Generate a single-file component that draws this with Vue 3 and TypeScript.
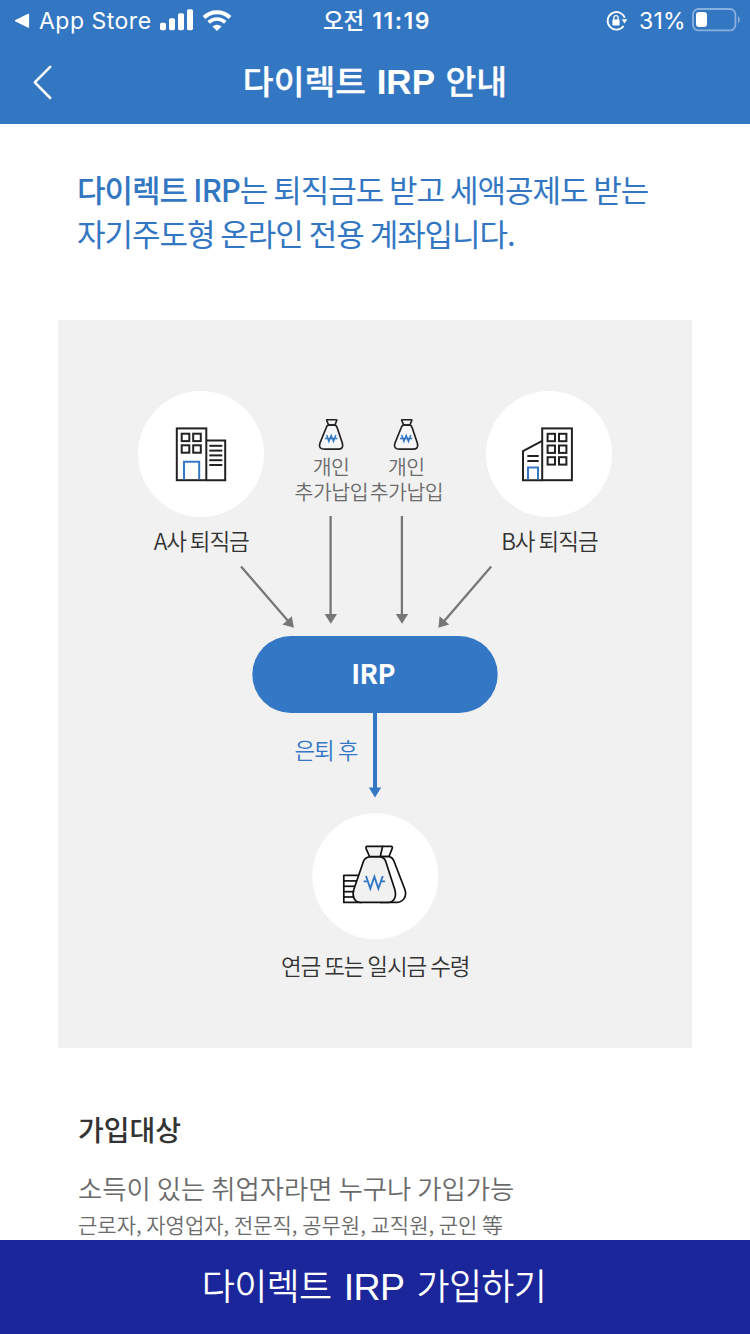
<script setup lang="ts">
interface Point {
  x: number
  y: number
}

const signalBars: { x: number; h: number }[] = [
  { x: 0, h: 7.5 },
  { x: 9, h: 12 },
  { x: 18, h: 17 },
  { x: 27, h: 21 },
]

const windowsA: Point[] = [
  { x: 181.7, y: 433.7 },
  { x: 193.2, y: 433.7 },
  { x: 181.7, y: 445.3 },
  { x: 193.2, y: 445.3 },
]
const slatsA: number[] = [445.8, 450.6, 455.4, 460.2, 465]

const windowsB: Point[] = [433.8, 445.5, 457.2].flatMap((y) => [
  { x: 547.6, y },
  { x: 559, y },
])

const coinLines: number[] = [880.9, 886.3, 891.7, 897]
const deposits: number[] = [0, 75]
</script>

<template>
  <div class="screen">
    <header class="top">
      <div class="status">
        <div class="status-left">
          <svg class="return" width="16" height="16" viewBox="0 0 16 16">
            <path d="M1 8.7 L14.6 2 V15.4 Z" fill="#fff" stroke="#fff" stroke-width="1" stroke-linejoin="round" />
          </svg>
          <span class="carrier">App Store</span>
          <svg class="signal" width="33" height="22" viewBox="0 0 33 22">
            <rect v-for="b in signalBars" :key="b.x" :x="b.x" :y="21.2 - b.h" width="6" :height="b.h" rx="1.6" fill="#fff" />
          </svg>
          <svg class="wifi" width="30" height="23" viewBox="0 0 30 23">
            <path d="M2 8.5 A18.6 18.6 0 0 1 28 8.5" fill="none" stroke="#fff" stroke-width="4" />
            <path d="M6.7 13.4 A11.9 11.9 0 0 1 23.3 13.4" fill="none" stroke="#fff" stroke-width="3.6" />
            <path d="M10.5 17.5 A6.6 6.6 0 0 1 19.5 17.5 L15 22 Z" fill="#fff" />
          </svg>
        </div>
        <div class="time"><span class="time-ko">오전</span><span class="time-num">11:19</span></div>
        <div class="status-right">
          <svg class="lock" width="22" height="22" viewBox="0 0 22 22">
            <path d="M17.6 16 A8.8 8.8 0 1 1 18.7 7.7" fill="none" stroke="#fff" stroke-width="1.8" />
            <path d="M15.6 9.2 H21.4 L18.5 13.4 Z" fill="#fff" />
            <rect x="6.4" y="9.6" width="7.2" height="5.8" rx="0.9" fill="#fff" />
            <path d="M7.9 10 V7.8 A2.1 2.1 0 0 1 12.1 7.8 V10" fill="none" stroke="#fff" stroke-width="1.3" />
          </svg>
          <span class="percent">31%</span>
          <svg class="battery" width="48" height="24" viewBox="0 0 48 24">
            <rect x="1" y="1" width="42.4" height="21.4" rx="5.5" fill="none" stroke="#fff" stroke-opacity="0.42" stroke-width="1.8" />
            <path d="M46 8 Q47.8 9.5 47.8 11.7 Q47.8 14 46 15.4 Z" fill="#fff" fill-opacity="0.42" />
            <rect x="4" y="4" width="11" height="15" rx="3" fill="#fff" />
          </svg>
        </div>
      </div>
      <div class="nav">
        <svg class="back" width="22" height="36" viewBox="0 0 22 36">
          <path d="M18.2 2.8 L2.8 18.4 L18.2 34" fill="none" stroke="#fff" stroke-width="2.5" stroke-linecap="round" stroke-linejoin="round" />
        </svg>
        <h1 class="title">다이렉트 <span class="title-en">IRP</span> 안내</h1>
      </div>
    </header>

    <main class="content">
      <p class="intro"><strong>다이렉트 IRP</strong>는 퇴직금도 받고 세액공제도 받는<br />자기주도형 온라인 전용 계좌입니다.</p>

      <svg class="diagram" width="634" height="728" viewBox="58 320 634 728">
        <rect x="58" y="320" width="634" height="728" fill="#f1f1f1" />
        <circle cx="201" cy="454" r="63" fill="#fff" />
        <circle cx="549" cy="454" r="63" fill="#fff" />
        <circle cx="375.3" cy="876.2" r="63" fill="#fff" />

        <g fill="none" stroke="#222" stroke-width="2">
          <rect x="176.8" y="428.4" width="29.5" height="51.8" />
          <path d="M206.3 440.5 H225.2 V480.2 H206.3" />
          <rect v-for="(w, i) in windowsA" :key="i" :x="w.x" :y="w.y" width="7.6" height="7.4" />
          <path v-for="y in slatsA" :key="y" :d="`M209.3 ${y} H222.3`" />
          <path d="M184 479.2 V461.7 H199.2 V479.2" stroke="#3478c5" />
        </g>

        <g fill="none" stroke="#222" stroke-width="2">
          <rect x="542.2" y="428.4" width="29.7" height="51.8" />
          <path d="M542.2 440.8 L523 451 V480.2 H542.2" />
          <rect v-for="(w, i) in windowsB" :key="i" :x="w.x" :y="w.y" width="7.4" height="7.4" />
          <path d="M527.3 456 H538.7 M527.3 461.1 H538.7" />
          <path d="M528 479.2 V467.5 H538 V479.2" stroke="#3478c5" />
        </g>

        <g v-for="dx in deposits" :key="dx" :transform="`translate(${dx} 0)`">
          <path d="M326.7 420.4 Q326.3 419.7 327.4 419.7 H336 Q337.2 419.7 336.8 420.4 L334.9 425 H328.6 Z" fill="#f1f1f1" stroke="#222" stroke-width="1.6" />
          <path d="M328.5 425.2 H334.9 Q336.4 425.4 337.1 427.5 L342.4 443.2 Q343.9 449.2 338 449.2 H325 Q318 449.2 319.9 443.2 L326.3 427.5 Q327 425.4 328.5 425.2 Z" fill="#f5f6f7" stroke="#222" stroke-width="1.7" />
          <path d="M325 438.4 H337.3 M326.7 435 L328.9 441.4 L331.2 435.6 L333.5 441.4 L335.8 435" fill="none" stroke="#3478c5" stroke-width="1.5" />
        </g>

        <g fill="#f1f1f1" stroke="#111" stroke-width="1.7" stroke-linejoin="round">
          <path d="M360 875.4 H343.8 V902.4 H362" fill="#fff" />
          <path v-for="y in coinLines" :key="y" :d="`M343.8 ${y} H360`" />
          <path d="M382 846.4 H391.4 Q392.8 846.8 392.2 848.4 L389 856.5 H380" fill="#fff" />
          <path d="M380 856.6 H389.3 Q392.4 857.4 393.8 860.7 L404.7 889 C407.6 896.8 402.8 902.4 396.5 902.4 H380" fill="#fff" />
          <path d="M366.8 846.4 H382.6 L380.3 856.5 H369.5 L366 848.4 Q365.6 846.8 366.8 846.4 Z" />
          <path d="M369.7 856.8 H380.5 Q384.2 857.4 385.5 860.7 L394.8 889.5 C397 897.5 393.5 902.4 388.5 902.4 H360.5 C354.2 902.4 351.8 896 353.8 889.5 L363.5 861.2 Q365 857.2 369.7 856.8 Z" />
          <path d="M363.6 881.4 H367 M381.5 881.4 H385 M366 876 L370.3 888.5 L374.4 876.6 L378.4 888.5 L382.8 876" fill="none" stroke="#3478c5" stroke-width="1.9" stroke-linejoin="miter" />
        </g>

        <g fill="none" stroke="#777" stroke-width="2.3">
          <path d="M330.6 516 V615 M401.9 516 V615 M241 566.5 L289 622 M491.2 566.5 L443.4 622" />
        </g>
        <g fill="#777">
          <path d="M324.6 614 H337 L330.8 623.8 Z" />
          <path d="M395.8 614 H408.2 L402 623.8 Z" />
          <path d="M293.9 627.8 L282.5 624.6 L291.8 616.3 Z" />
          <path d="M438.4 627.8 L449.2 624.6 L439.6 616.3 Z" />
        </g>

        <rect x="252.3" y="636" width="245.4" height="77" rx="38.5" fill="#3478c5" />
        <path d="M375 712 V789" stroke="#3478c5" stroke-width="4" />
        <path d="M368.8 787.6 H381.2 L375 797.4 Z" fill="#3478c5" />

        <g class="label">
          <text x="153.8" y="549.5" textLength="96" font-size="22.5">A사 퇴직금</text>
          <text x="501.2" y="549.5" textLength="97.5" font-size="22.5">B사 퇴직금</text>
          <text x="281" y="975.4" textLength="189.5" font-size="22.5">연금 또는 일시금 수령</text>
        </g>
        <g class="label soft">
          <text x="312.8" y="475" textLength="37" font-size="20.5">개인</text>
          <text x="388" y="475" textLength="37" font-size="20.5">개인</text>
          <text x="294.5" y="500" textLength="74" font-size="20.5">추가납입</text>
          <text x="369.7" y="500" textLength="74" font-size="20.5">추가납입</text>
        </g>
        <text class="label blue" x="294.4" y="759" textLength="64" font-size="22.5">은퇴 후</text>
        <text class="label pill" x="351.2" y="683.6" textLength="44.3" font-size="27">IRP</text>
      </svg>

      <section class="target">
        <h2>가입대상</h2>
        <p class="who">소득이 있는 취업자라면 누구나 가입가능</p>
        <p class="jobs">근로자, 자영업자, 전문직, 공무원, 교직원, 군인 等</p>
      </section>
    </main>

    <button class="join" type="button">다이렉트 <span class="join-en">IRP</span> 가입하기</button>
  </div>
</template>

<style>
body {
  margin: 0;
  background: #fff;
}
</style>

<style scoped>
.screen {
  display: flex;
  flex-direction: column;
  width: 750px;
  height: 1334px;
  overflow: hidden;
  background: #fff;
  font-family: "Noto Sans CJK KR", sans-serif;
}
.top {
  flex: none;
  height: 124px;
  background: #3377c3;
  color: #fff;
}
.status {
  display: grid;
  grid-template-columns: 1fr auto 1fr;
  align-items: center;
  height: 40px;
  padding: 0 10px 0 14px;
  font-family: Inter, "Noto Sans CJK KR", sans-serif;
  font-size: 23px;
  line-height: 38px;
  white-space: nowrap;
}
.status svg {
  flex: none;
}
.status .lock {
  margin-top: 1px;
}
.status-left,
.status-right,
.time {
  display: flex;
  align-items: center;
}
.return {
  margin-right: 9px;
}
.carrier {
  width: 112px;
  padding-top: 2px;
  letter-spacing: 0.5px;
}
.signal {
  margin-left: 9px;
}
.wifi {
  margin-left: 9px;
}
.time-ko {
  font-family: "Noto Sans CJK KR", sans-serif;
  font-size: 22.5px;
  font-weight: 500;
  line-height: 36px;
  margin: -2px 8px 0 0;
}
.time-num {
  padding-top: 2px;
  font-weight: 600;
  letter-spacing: 1.5px;
}
.status-right {
  justify-content: flex-end;
}
.percent {
  padding-top: 2px;
  margin: 0 6px 0 11px;
  letter-spacing: 0.3px;
}
.nav {
  display: grid;
  grid-template-columns: 32px 1fr 32px;
  align-items: center;
  height: 84px;
  padding: 0 32px;
}
.title {
  margin: 0;
  font-size: 33.5px;
  font-weight: 500;
  line-height: 80px;
  height: 84px;
  text-align: center;
  white-space: nowrap;
  word-spacing: 3px;
  -webkit-text-stroke: 0.3px #fff;
}
.title-en {
  font-family: "Liberation Sans", sans-serif;
  font-size: 35px;
  font-weight: 700;
  -webkit-text-stroke: 0;
}
.content {
  flex: 1;
  min-height: 0;
  overflow: hidden;
}
.intro {
  margin: 43px 0 65px 77px;
  color: #3377c3;
  font-size: 31px;
  line-height: 44px;
  letter-spacing: -1.03px;
  white-space: nowrap;
}
.intro strong {
  font-weight: 500;
}
.diagram {
  display: block;
  margin-left: 58px;
}
.label {
  fill: #333;
  font-family: "Noto Sans CJK KR", sans-serif;
  font-weight: 350;
}
.soft {
  fill: #6c6c6c;
}
.blue {
  fill: #3478c5;
}
.pill {
  fill: #fff;
  font-weight: 700;
}
.target {
  padding: 61px 0 0 78px;
  color: #6a6a6a;
  white-space: nowrap;
}
.target h2 {
  margin: 0 0 19px;
  color: #333;
  font-size: 28px;
  font-weight: 500;
  line-height: 40px;
}
.target p {
  margin: 0;
}
.target .who {
  font-size: 26.4px;
  font-weight: 350;
  line-height: 40px;
}
.target .jobs {
  font-size: 21px;
  font-weight: 350;
  line-height: 33px;
  letter-spacing: 0;
}
.join {
  flex: none;
  height: 94px;
  border: 0;
  padding: 0 2px 4px 0;
  background: #1a269a;
  color: #fff;
  font-family: "Noto Sans CJK KR", sans-serif;
  font-size: 36px;
  font-weight: 350;
  letter-spacing: -0.7px;
  line-height: 88px;
  word-spacing: 5px;
  white-space: nowrap;
}
.join-en {
  font-family: "Liberation Sans", sans-serif;
  font-size: 37.5px;
}
</style>
